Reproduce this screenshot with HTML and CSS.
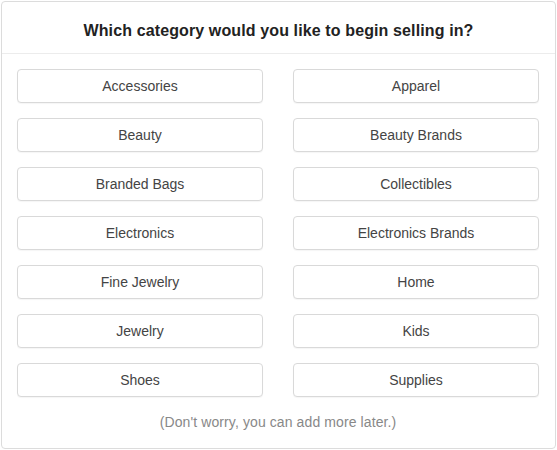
FILE: index.html
```html
<!DOCTYPE html>
<html lang="en">
<head>
    <meta charset="UTF-8">
    <meta name="viewport" content="width=device-width, initial-scale=1.0">
    <title>Choose a category</title>
    <link rel="stylesheet" href="styles.css">
</head>
<body>

    <div class="category-card">
        <div class="card-header">Which category would you like to begin selling in?</div>
        <div class="card-body">
            <div class="category-grid">
                <button class="category-btn">Accessories</button>
                <button class="category-btn">Apparel</button>
                <button class="category-btn">Beauty</button>
                <button class="category-btn">Beauty Brands</button>
                <button class="category-btn">Branded Bags</button>
                <button class="category-btn">Collectibles</button>
                <button class="category-btn">Electronics</button>
                <button class="category-btn">Electronics Brands</button>
                <button class="category-btn">Fine Jewelry</button>
                <button class="category-btn">Home</button>
                <button class="category-btn">Jewelry</button>
                <button class="category-btn">Kids</button>
                <button class="category-btn">Shoes</button>
                <button class="category-btn">Supplies</button>
            </div>
            <p class="note">(Don't worry, you can add more later.)</p>
        </div>
    </div>

</body>
</html>
```

FILE: styles.css
```css
/* General Styles */
body {
    font-family: 'Liberation Sans', Arial, sans-serif;
    background-color: #ffffff;
    color: #333333;
    margin: 0;
    padding: 1px;
}

/* Card */
.category-card {
    width: 555px;
    height: 448px;
    box-sizing: border-box;
    border: 1px solid #dcdcdc;
    border-radius: 4px;
    background-color: #ffffff;
}

.card-header {
    height: 51px;
    line-height: 57px;
    border-bottom: 1px solid #ececec;
    text-align: center;
    font-size: 16px;
    font-weight: bold;
    letter-spacing: 0.12px;
    color: #222222;
}

.card-body {
    padding: 15px 16px 0 15px;
}

.category-grid {
    display: grid;
    grid-template-columns: 246px 246px;
    column-gap: 30px;
    row-gap: 15px;
}

.category-btn {
    height: 34px;
    padding: 0;
    border: 1px solid #d9d9d9;
    border-radius: 4px;
    background-color: #ffffff;
    font-family: inherit;
    font-size: 14px;
    color: #444444;
    cursor: pointer;
    box-shadow: 0 1px 1px rgba(0, 0, 0, 0.04);
}

.category-btn:hover {
    border-color: #bbbbbb;
}

/* Footer note */
.note {
    margin: 17px 0 0;
    text-align: center;
    font-size: 14px;
    letter-spacing: 0.1px;
    color: #888888;
}
```
